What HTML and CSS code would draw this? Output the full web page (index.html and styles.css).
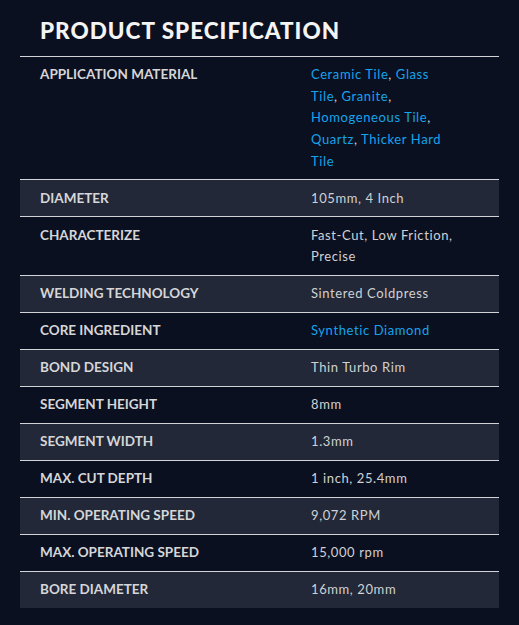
FILE: index.html
```html
<!DOCTYPE html>
<html>
<head>
<meta charset="utf-8">
<link rel="stylesheet" href="styles.css">
</head>
<body>
<section class="spec">
  <h1 class="spec-title">PRODUCT SPECIFICATION</h1>
  <div class="spec-table">
    <div class="row"><div class="label">APPLICATION MATERIAL</div><div class="value"><span class="link">Ceramic Tile</span>, <span class="link">Glass</span> <span class="link">Tile</span>, <span class="link">Granite</span>, <span class="link">Homogeneous Tile</span>, <span class="link">Quartz</span>, <span class="link">Thicker Hard</span> <span class="link">Tile</span></div></div>
    <div class="row alt"><div class="label">DIAMETER</div><div class="value">105mm, 4 Inch</div></div>
    <div class="row"><div class="label">CHARACTERIZE</div><div class="value">Fast-Cut, Low Friction, Precise</div></div>
    <div class="row alt"><div class="label">WELDING TECHNOLOGY</div><div class="value">Sintered Coldpress</div></div>
    <div class="row"><div class="label">CORE INGREDIENT</div><div class="value"><span class="link">Synthetic Diamond</span></div></div>
    <div class="row alt"><div class="label">BOND DESIGN</div><div class="value">Thin Turbo Rim</div></div>
    <div class="row"><div class="label">SEGMENT HEIGHT</div><div class="value">8mm</div></div>
    <div class="row alt"><div class="label">SEGMENT WIDTH</div><div class="value">1.3mm</div></div>
    <div class="row"><div class="label">MAX. CUT DEPTH</div><div class="value">1 inch, 25.4mm</div></div>
    <div class="row alt"><div class="label">MIN. OPERATING SPEED</div><div class="value">9,072 RPM</div></div>
    <div class="row"><div class="label">MAX. OPERATING SPEED</div><div class="value">15,000 rpm</div></div>
    <div class="row alt"><div class="label">BORE DIAMETER</div><div class="value">16mm, 20mm</div></div>
  </div>
</section>
</body>
</html>
```
FILE: styles.css
```css
html, body {
  margin: 0;
  padding: 0;
  background: #0b1020;
}
body {
  font-family: "Lato", "Liberation Sans", sans-serif;
  height: 625px;
}
.spec {
  padding: 16px 20px 0 20px;
}
.spec-title {
  margin: 0;
  padding: 0 0 10px 20px;
  font-size: 22.5px;
  line-height: 30px;
  font-weight: 900;
  letter-spacing: 1px;
  color: #f4f4f4;
}
.spec-table {
  width: 479px;
}
.row {
  display: grid;
  grid-template-columns: 271px 148px;
  padding: 7.2px 0 7.2px 20px;
  border-top: 1px solid #d2d3d6;
  line-height: 21.6px;
}
.row.alt {
  background: #222837;
}
.label {
  font-size: 13.5px;
  font-weight: 700;
  color: #d6d6d8;
}
.value {
  font-size: 13px;
  font-weight: 400;
  color: #d0d1d4;
  letter-spacing: 0.6px;
}
.link {
  color: #16a3ec;
}
```
